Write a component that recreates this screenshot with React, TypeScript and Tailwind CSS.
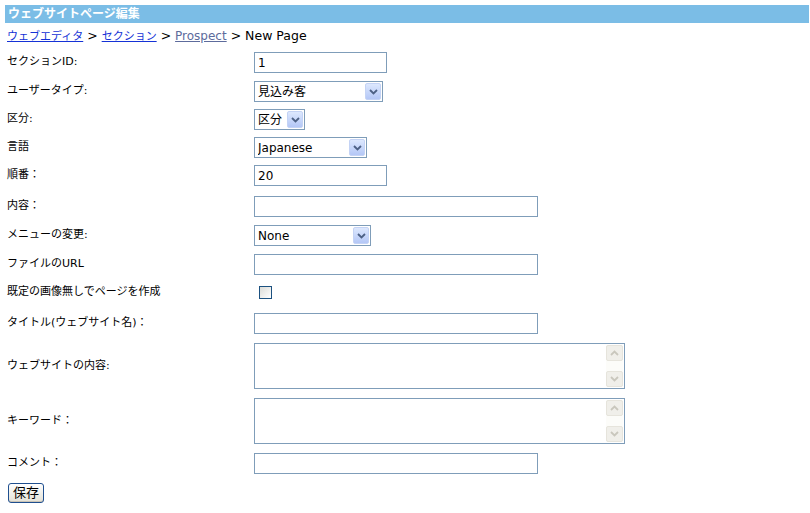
import { ReactNode } from "react";

const FONT = "font-['DejaVu_Sans','Noto_Sans_CJK_JP',sans-serif]";

const Chevron = ({ up = false, color = "#4d6185" }: { up?: boolean; color?: string }) => (
    <svg width="9" height="6" viewBox="0 0 9 6" className={up ? "rotate-180" : ""}>
        <path d="M1 1 L4.5 4.5 L8 1" fill="none" stroke={color} strokeWidth="1.8" />
    </svg>
);

const TextBox = ({ w, value = "" }: { w: string; value?: string }) => (
    <div className={`${w} h-[21px] border border-[#7f9db9] bg-white flex items-center px-[3px] text-[12px] text-black`}>
        {value}
    </div>
);

const SelectBox = ({ w, value }: { w: string; value: string }) => (
    <div className={`${w} h-[21px] border border-[#7f9db9] bg-white flex items-center pl-[3px] pr-[1px] text-[12px] text-black`}>
        <span className="flex-1 truncate">{value}</span>
        <span className="w-[16px] h-[17px] rounded-[2px] bg-gradient-to-b from-[#dde8fe] to-[#b4c7f6] border border-[#c4d3f5] flex items-center justify-center">
            <Chevron />
        </span>
    </div>
);

const TextArea = () => (
    <div className="w-[371px] h-[46px] border border-[#7f9db9] bg-white flex justify-end p-[1px]">
        <div className="w-[17px] h-full bg-[#fcfcf9] flex flex-col justify-between">
            <span className="h-[16px] rounded-[2px] bg-[#f0efea] border border-[#e6e4dc] flex items-center justify-center">
                <Chevron up color="#c9c7bd" />
            </span>
            <span className="h-[16px] rounded-[2px] bg-[#f0efea] border border-[#e6e4dc] flex items-center justify-center">
                <Chevron color="#c9c7bd" />
            </span>
        </div>
    </div>
);

const Row = ({ label, mt, children }: { label: string; mt: string; children: ReactNode }) => (
    <div className={`flex items-center ${mt}`}>
        <div className="w-[247px] text-[11px] text-black">{label}</div>
        {children}
    </div>
);

export default function App() {
    return (
        <div className={`${FONT} w-[810px] h-[513px] bg-white pt-[5px] overflow-hidden`}>
            <div className="ml-[5px] mr-[1px] h-[18px] bg-[#7bbde6] text-white font-bold text-[12px] leading-[18px] pl-[3px]">
                ウェブサイトページ編集
            </div>
            <div className="pl-[7px] mt-[5px] text-[12.5px] text-black leading-[16px]">
                <a className="text-[#1532d6] underline text-[11px]">ウェブエディタ</a>
                {" > "}
                <a className="text-[#1532d6] underline text-[11px]">セクション</a>
                {" > "}
                <a className="text-[#5d6b9c] underline text-[12px]">Prospect</a>
                {" > New Page"}
            </div>

            <div className="pl-[7px]">
                <Row label="セクションID:" mt="mt-[7px]">
                    <TextBox w="w-[133px]" value="1" />
                </Row>
                <Row label="ユーザータイプ:" mt="mt-[8px]">
                    <SelectBox w="w-[129px]" value="見込み客" />
                </Row>
                <Row label="区分:" mt="mt-[7px]">
                    <SelectBox w="w-[51px]" value="区分" />
                </Row>
                <Row label="言語" mt="mt-[7px]">
                    <SelectBox w="w-[113px]" value="Japanese" />
                </Row>
                <Row label="順番：" mt="mt-[7px]">
                    <TextBox w="w-[133px]" value="20" />
                </Row>
                <Row label="内容：" mt="mt-[10px]">
                    <TextBox w="w-[284px]" />
                </Row>
                <Row label="メニューの変更:" mt="mt-[8px]">
                    <SelectBox w="w-[117px]" value="None" />
                </Row>
                <Row label="ファイルのURL" mt="mt-[8px]">
                    <TextBox w="w-[284px]" />
                </Row>
                <Row label="既定の画像無しでページを作成" mt="mt-[7px]">
                    <div className="h-[21px] flex items-center pl-[5px]">
                        <span className="w-[13px] h-[13px] border border-[#1c5180] bg-gradient-to-br from-[#dcdcd7] to-[#ffffff]" />
                    </div>
                </Row>
                <Row label="タイトル(ウェブサイト名)：" mt="mt-[10px]">
                    <TextBox w="w-[284px]" />
                </Row>
                <Row label="ウェブサイトの内容:" mt="mt-[9px]">
                    <TextArea />
                </Row>
                <Row label="キーワード：" mt="mt-[9px]">
                    <TextArea />
                </Row>
                <Row label="コメント：" mt="mt-[9px]">
                    <TextBox w="w-[284px]" />
                </Row>
                <button className="mt-[9px] ml-[1px] h-[20px] px-[4px] rounded-[3px] border border-[#1f4f8f] bg-gradient-to-b from-[#ffffff] to-[#e3e1d6] text-[13px] leading-[16px] text-black shadow-[inset_0_-1px_0_#c9c3b6]">
                    保存
                </button>
            </div>
        </div>
    );
}
